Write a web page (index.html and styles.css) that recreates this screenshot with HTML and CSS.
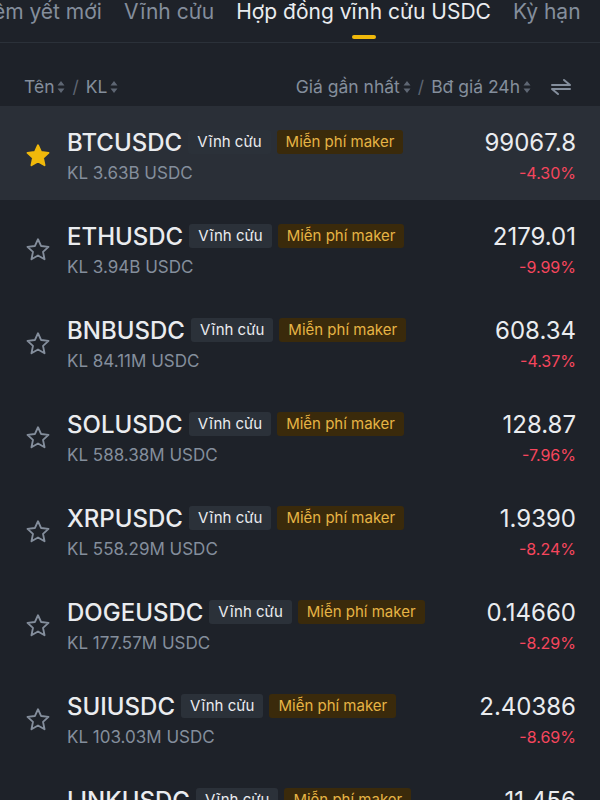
FILE: index.html
```html
<!DOCTYPE html>
<html lang="vi">
<head>
    <meta charset="UTF-8">
    <meta name="viewport" content="width=device-width, initial-scale=1.0">
    <title>Hợp đồng vĩnh cửu USDC</title>
    <link rel="stylesheet" href="styles.css">
</head>
<body>
    <div class="tabs">
        <div class="tab tab-cut">Niêm yết mới</div>
        <div class="tab">Vĩnh cửu</div>
        <div class="tab active">Hợp đồng vĩnh cửu USDC</div>
        <div class="tab">Kỳ hạn</div>
    </div>

    <div class="list-head">
        <div class="head-left">
            <span>Tên</span>
            <svg class="sort" width="8" height="14" viewBox="0 0 8 14"><path d="M4 1 L7.5 5.5 H0.5 Z M4 13 L7.5 8.5 H0.5 Z" fill="#5e6673"/></svg>
            <span class="slash">/</span>
            <span>KL</span>
            <svg class="sort" width="8" height="14" viewBox="0 0 8 14"><path d="M4 1 L7.5 5.5 H0.5 Z M4 13 L7.5 8.5 H0.5 Z" fill="#5e6673"/></svg>
        </div>
        <div class="head-right">
            <span>Giá gần nhất</span>
            <svg class="sort" width="8" height="14" viewBox="0 0 8 14"><path d="M4 1 L7.5 5.5 H0.5 Z M4 13 L7.5 8.5 H0.5 Z" fill="#5e6673"/></svg>
            <span class="slash">/</span>
            <span>Bđ giá 24h</span>
            <svg class="sort" width="8" height="14" viewBox="0 0 8 14"><path d="M4 1 L7.5 5.5 H0.5 Z M4 13 L7.5 8.5 H0.5 Z" fill="#5e6673"/></svg>
            <svg class="swap" width="20" height="18" viewBox="0 0 20 18">
                <path d="M1 7 H19 L13 2" fill="none" stroke="#848e9c" stroke-width="2" stroke-linejoin="round" stroke-linecap="round"/>
                <path d="M19 11 H1 L7 16" fill="none" stroke="#848e9c" stroke-width="2" stroke-linejoin="round" stroke-linecap="round"/>
            </svg>
        </div>
    </div>

    <div class="rows" id="rows"></div>

    <script>
        // dữ liệu danh sách hợp đồng
        const data = [
            ['BTCUSDC', '3.63B', '99067.8', '-4.30%', true],
            ['ETHUSDC', '3.94B', '2179.01', '-9.99%'],
            ['BNBUSDC', '84.11M', '608.34', '-4.37%'],
            ['SOLUSDC', '588.38M', '128.87', '-7.96%'],
            ['XRPUSDC', '558.29M', '1.9390', '-8.24%'],
            ['DOGEUSDC', '177.57M', '0.14660', '-8.29%'],
            ['SUIUSDC', '103.03M', '2.40386', '-8.69%'],
            ['LINKUSDC', '92.41M', '11.456', '-8.94%']
        ];

        const starPath = 'M12 2.8 L14.7 8.6 L21 9.3 L16.3 13.6 L17.6 19.9 L12 16.7 L6.4 19.9 L7.7 13.6 L3 9.3 L9.3 8.6 Z';
        const rows = document.getElementById('rows');

        data.forEach(([sym, vol, price, chg, fav]) => {
            const row = document.createElement('div');
            row.className = fav ? 'row fav' : 'row';
            row.innerHTML = `
                <svg class="star" width="28" height="28" viewBox="0 0 24 24">
                    <path d="${starPath}" fill="${fav ? '#f0b90b' : 'none'}"
                        stroke="${fav ? '#f0b90b' : '#848e9c'}" stroke-width="1.6" stroke-linejoin="round"/>
                </svg>
                <div class="info">
                    <div class="line1">
                        <span class="sym">${sym}</span>
                        <span class="tag">Vĩnh cửu</span>
                        <span class="tag gold">Miễn phí maker</span>
                    </div>
                    <div class="vol">KL ${vol} USDC</div>
                </div>
                <div class="nums">
                    <div class="price">${price}</div>
                    <div class="chg">${chg}</div>
                </div>`;
            rows.appendChild(row);
        });
    </script>
</body>
</html>
```

FILE: styles.css
```css
body {
    margin: 0;
    background-color: #1e2229;
    color: #eaecef;
    font-family: Inter, "Noto Sans", sans-serif;
    height: 800px;
    overflow: hidden;
}

.tabs {
    display: flex;
    gap: 22px;
    white-space: nowrap;
    height: 42px;
    border-bottom: 1px solid #2b3139;
    overflow: hidden;
    font-size: 21px;
    color: #848e9c;
    line-height: 24px;
}

.tab {
    position: relative;
    flex: none;
}

.tab-cut {
    margin-left: -28px;
}

.tab.active {
    color: #eaecef;
}

.tab.active::after {
    content: '';
    position: absolute;
    left: 50%;
    top: 35px;
    width: 24px;
    height: 4px;
    margin-left: -12px;
    border-radius: 2px;
    background-color: #f0b90b;
}

.list-head {
    display: flex;
    justify-content: space-between;
    align-items: center;
    height: 63px;
    padding: 24px 29px 0 24px;
    box-sizing: border-box;
    font-size: 17.5px;
    color: #848e9c;
}

.head-left,
.head-right {
    display: flex;
    align-items: center;
}

.slash {
    margin: 0 7px;
    color: #5e6673;
}

.sort {
    margin-left: 3px;
}

.swap {
    margin-left: 20px;
}

.row {
    display: flex;
    align-items: center;
    height: 94px;
    box-sizing: border-box;
    padding: 4px 24px 0 24px;
}

.row.fav {
    background-color: #2a2f37;
}

.star {
    flex: none;
    margin-top: 2px;
}

.info {
    flex: 1;
    margin-left: 15px;
}

.line1 {
    display: flex;
    align-items: center;
    gap: 6px;
}

.sym {
    font-size: 24px;
    font-weight: 500;
    color: #eaecef;
}

.tag {
    font-size: 15px;
    line-height: 24px;
    padding: 0 9px;
    border-radius: 3px;
    background-color: #2b3139;
    color: #eaecef;
}

.tag.gold {
    background-color: #3a2a0b;
    color: #e6b445;
}

.vol {
    margin-top: 6px;
    font-size: 17px;
    color: #848e9c;
}

.nums {
    text-align: right;
}

.price {
    font-size: 24px;
    color: #eaecef;
}

.chg {
    margin-top: 6px;
    font-size: 16px;
    color: #f6465d;
}
```
